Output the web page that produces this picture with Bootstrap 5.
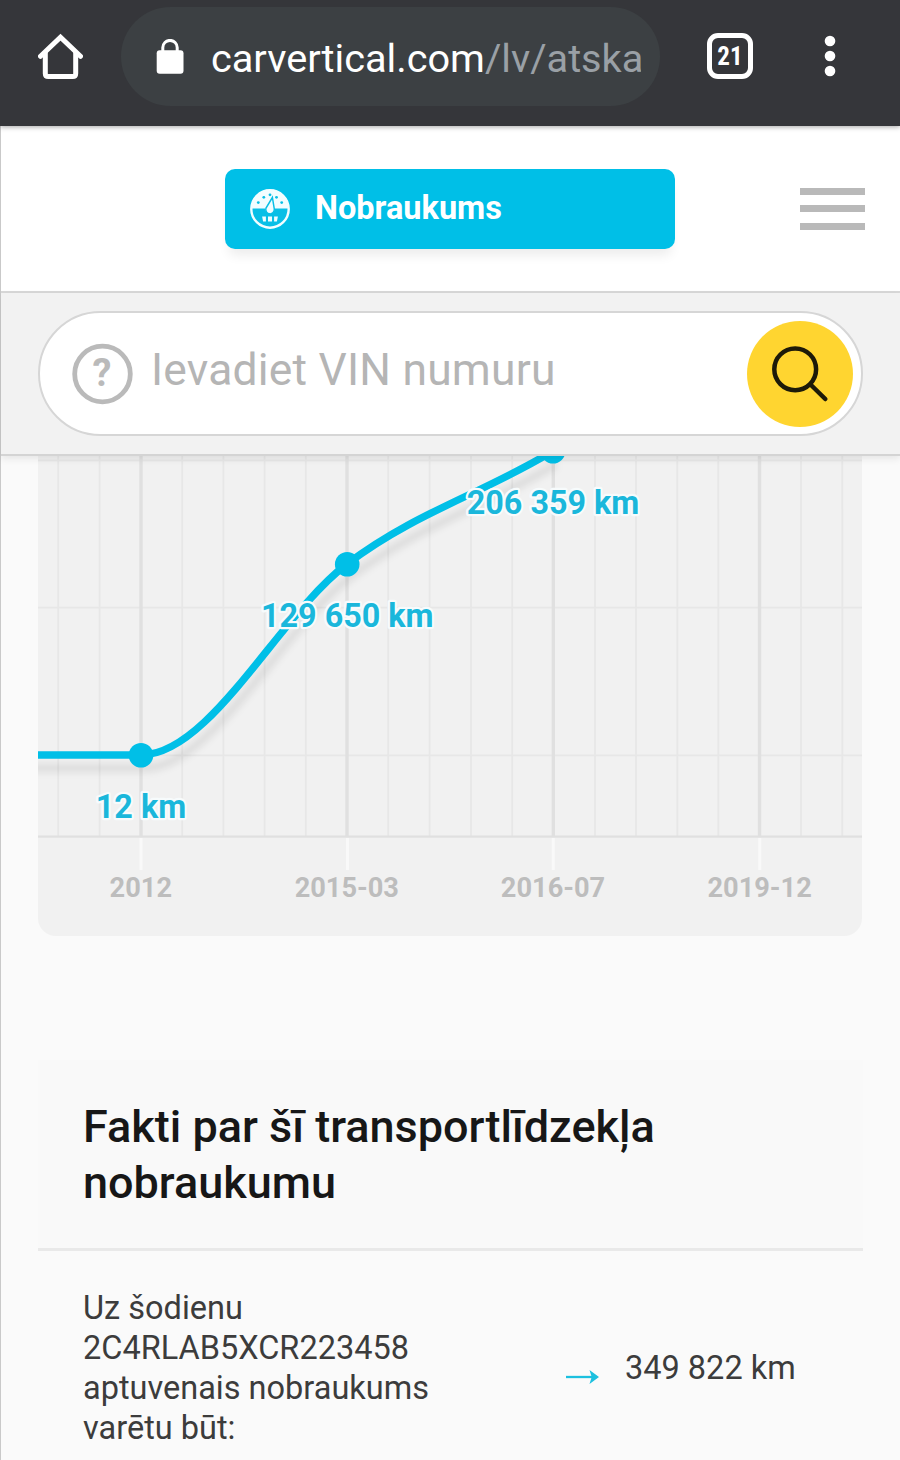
<!DOCTYPE html>
<html lang="lv">
<head>
<meta charset="utf-8">
<meta name="viewport" content="width=device-width, initial-scale=1">
<title>Nobraukums</title>
<link href="https://cdn.jsdelivr.net/npm/bootstrap@5.3.0/dist/css/bootstrap.min.css" rel="stylesheet">
<style>
  body { font-family: Roboto, "Liberation Sans", sans-serif; background: #fafafa; }
  .screen { width: 900px; height: 1460px; }
  .browser-bar { height: 126px; background: #35363a; padding: 0 0 14px 38px; z-index: 3; box-shadow: 0 1px 5px rgba(0,0,0,.35); }
  .address-pill { width: 539px; height: 99px; margin: 1px 0 0 38px; padding: 0 19px 0 35px; border-radius: 50px; background: #3c4043; }
  .address-text { margin-left: 27px; padding-top: 4px; font-size: 39.7px; line-height: 56px; color: #fff; width: 430px; }
  .address-text span { color: #9aa0a6; }
  .tab-count { width: 46px; height: 46px; margin-left: 47px; border: 5px solid #fff; border-radius: 11px; color: #fff; font: 700 25px/38px "Roboto Condensed", Roboto, sans-serif; }
  .page-area { border-left: 1px solid #c9c9c9; }
  .page-head { height: 167px; background: #fff; border-bottom: 2px solid #d8d8d8; padding: 0 35px 0 224px; }
  .section-btn { width: 450px; height: 80px; padding: 0 25px; border: 0; border-radius: 10px; background: #00bfe7; box-shadow: 0 10px 12px -4px rgba(0,0,0,.08); font-size: 32.5px; font-weight: 700; color: #fff; }
  .section-btn:hover { background: #00bfe7; color: #fff; }
  .section-btn span { margin-left: 24px; }
  .menu-lines span { display: block; width: 65px; height: 7px; background: #b9b9b9; }
  .menu-lines { gap: 10.5px; }
  .search-strip { height: 163px; padding: 18px 37px 0 37px; background: #f2f2f2; border-bottom: 2px solid #d4d4d4; z-index: 2; box-shadow: 0 3px 7px rgba(0,0,0,.08); }
  .vin-box { height: 125px; padding: 0 8px 0 32px; border: 2px solid #d6d6d6; border-radius: 63px; background: #fff; }
  .vin-text { margin: 0 0 7px 18px; font-size: 44.4px; color: #b5b5b5; letter-spacing: .22px; line-height: 60px; }
  .find-btn { width: 106px; height: 106px; background: #ffd530; }
  .chart-wrap { margin: 0 38px 0 37px; height: 480px; }
  .chart-wrap svg { display: block; border-radius: 0 0 18px 18px; }
  .value-label { font-weight: 700; font-size: 32.3px; fill: #1ab7db; stroke: #f7fbfc; stroke-width: 4.5px; stroke-linejoin: round; paint-order: stroke; }
  .date-label { font-weight: 700; font-size: 27.2px; fill: #bdbdbd; }
  .facts { margin: 124px 37px 0 37px; }
  .facts-title { height: 191px; margin: 0; padding: 39px 45px 0; background: #f9f9f9; border-bottom: 3px solid #e9e9e9; font-size: 45px; line-height: 56px; font-weight: 500; color: #171717; }
  .facts-row { padding: 37px 45px 0; color: #3c3c3c; font-size: 32.5px; line-height: 40px; }
  .facts-name { width: 370px; }
</style>
</head>
<body>
<div class="screen overflow-hidden d-flex flex-column">
  <header class="browser-bar d-flex align-items-center position-relative flex-shrink-0">
    <svg width="45" height="46" viewBox="0 0 45 46" fill="none" stroke="#fff" stroke-width="5" stroke-linejoin="round" stroke-linecap="round"><path d="M2.5 23.3 22.5 4.1l20 19.2" stroke-linejoin="miter"/><path d="M7.3 20v20.5q0 3 3 3h24.4q3 0 3-3V20"/></svg>
    <div class="address-pill d-flex align-items-center">
      <svg class="flex-shrink-0" width="28" height="36" viewBox="0 0 28 36"><rect x=".7" y="11.2" width="26.8" height="23.5" rx="3" fill="#fff"/><path d="M6.8 12V8.6a7.2 7.2 0 0 1 14.4 0V12" fill="none" stroke="#fff" stroke-width="3"/></svg>
      <div class="address-text text-nowrap overflow-hidden">carvertical.com<span>/lv/atska</span></div>
    </div>
    <div class="tab-count text-center">21</div>
    <svg style="margin-left:71px" width="12" height="42" viewBox="0 0 12 42" fill="#fff"><circle cx="6" cy="6" r="5.3"/><circle cx="6" cy="21" r="5.3"/><circle cx="6" cy="36" r="5.3"/></svg>
  </header>

  <main class="page-area flex-grow-1">
    <div class="page-head d-flex align-items-center justify-content-between">
      <button class="btn section-btn d-flex align-items-center">
        <svg width="41" height="42" viewBox="0 0 41 42"><circle cx="20" cy="21" r="18.7" fill="#08bfe6" stroke="#f2fdff" stroke-width="2.4"/><path d="M1 20.5a19 19 0 0 1 38 0H25a5 5 0 0 1-10 0Z" fill="#f2fdff"/><path d="M22.4 9.5 24.3 21a4.3 4.3 0 1 1-8.3-.9Z" fill="#f2fdff" stroke="#08bfe6" stroke-width="1.5"/><g fill="#08bfe6"><circle cx="8.3" cy="14.6" r="1.4"/><circle cx="13.8" cy="9.3" r="1.4"/><circle cx="20" cy="6.8" r="1.4"/><circle cx="26.5" cy="9.3" r="1.4"/><circle cx="31.7" cy="14.6" r="1.4"/></g><path d="M12.1 28.5h3.8v5h-2.8ZM18 28.5h4v5h-4ZM24.1 28.5h3.8l-1 5h-2.8Z" fill="#f2fdff"/></svg>
        <span>Nobraukums</span>
      </button>
      <div class="menu-lines d-flex flex-column"><span></span><span></span><span></span></div>
    </div>

    <div class="search-strip position-relative">
      <div class="vin-box d-flex align-items-center">
        <svg class="flex-shrink-0" width="61" height="62" viewBox="0 0 61 62"><circle cx="30.5" cy="31" r="27.8" fill="none" stroke="#bababa" stroke-width="4.8"/><text x="30" y="43.3" text-anchor="middle" font-family="Roboto" font-weight="700" font-size="38" fill="#bababa">?</text></svg>
        <div class="vin-text flex-grow-1">Ievadiet VIN numuru</div>
        <div class="find-btn rounded-circle d-flex align-items-center justify-content-center">
          <svg width="58" height="58" viewBox="0 0 58 58" fill="none" stroke="#1d1a08" stroke-width="4.5" stroke-linecap="round"><circle cx="24.2" cy="24.3" r="20.9"/><path d="M39.5 39.5 54.3 54"/></svg>
        </div>
      </div>
    </div>

    <div class="chart-wrap">
      <svg width="824" height="480" viewBox="38 456 824 480" font-family="Roboto">
        <defs>
          <filter id="soft" x="-5%" y="-10%" width="110%" height="125%"><feGaussianBlur stdDeviation="3.5"/></filter>
        </defs>
        <rect x="38" y="456" width="824" height="480" fill="#f1f1f1"/>
        <path d="M58.2 456V836M99.6 456V836M182.2 456V836M223.4 456V836M264.6 456V836M305.8 456V836M388.2 456V836M429.6 456V836M471 456V836M512.2 456V836M595 456V836M636 456V836M677.3 456V836M718.3 456V836M801 456V836M842.3 456V836M38 460.3H862M38 607.7H862M38 755.3H862" stroke="#e7e7e7" stroke-width="1.8" fill="none"/>
        <path d="M141 456V836M347 456V836M553.3 456V836M759.5 456V836" stroke="#e0e0e0" stroke-width="3.4"/>
        <path d="M38 836.6H862" stroke="#e0e0e0" stroke-width="2.4"/>
        <path d="M141 838V870M347.5 838V870M553.3 838V870M759.8 838V870" stroke="#f9f9f9" stroke-width="3"/>
        <path d="M20 755H141C209.7 755 278.3 616 347 564C415.7 512 484.3 493 553 451" transform="translate(3 13)" fill="none" stroke="#000" stroke-opacity=".09" stroke-width="8" filter="url(#soft)"/>
        <path d="M38 755H141C209.7 755 278.3 616 347 564C415.7 512 484.3 493 553 451" fill="none" stroke="#00bfe7" stroke-width="7.4"/>
        <g fill="#00bfe7"><circle cx="141" cy="755.3" r="12.3"/><circle cx="347.2" cy="564.2" r="12.3"/><circle cx="553" cy="451.3" r="12.3"/></g>
        <g class="value-label" text-anchor="middle"><text x="141" y="818">12 km</text><text x="347.3" y="627">129 650 km</text><text x="553" y="513.6">206 359 km</text></g>
        <g class="date-label" text-anchor="middle"><text x="140.8" y="897">2012</text><text x="346.8" y="897">2015-03</text><text x="553" y="897">2016-07</text><text x="759.6" y="897">2019-12</text></g>
      </svg>
    </div>

    <section class="facts">
      <h2 class="facts-title">Fakti par šī transportlīdzekļa nobraukumu</h2>
      <div class="facts-row d-flex align-items-center">
        <div class="facts-name">Uz šodienu 2C4RLAB5XCR223458 aptuvenais nobraukums varētu būt:</div>
        <svg style="margin:18px 25px 0 112px" width="35" height="16" viewBox="0 0 35 16"><path d="M1 8H30" fill="none" stroke="#1cc0df" stroke-width="2.3"/><path d="M24.5 1 34 8 24.5 15 26.7 8Z" fill="#1cc0df"/></svg>
        <div class="text-nowrap">349 822 km</div>
      </div>
    </section>
  </main>
</div>
<script src="https://cdn.jsdelivr.net/npm/bootstrap@5.3.0/dist/js/bootstrap.bundle.min.js"></script>
</body>
</html>
